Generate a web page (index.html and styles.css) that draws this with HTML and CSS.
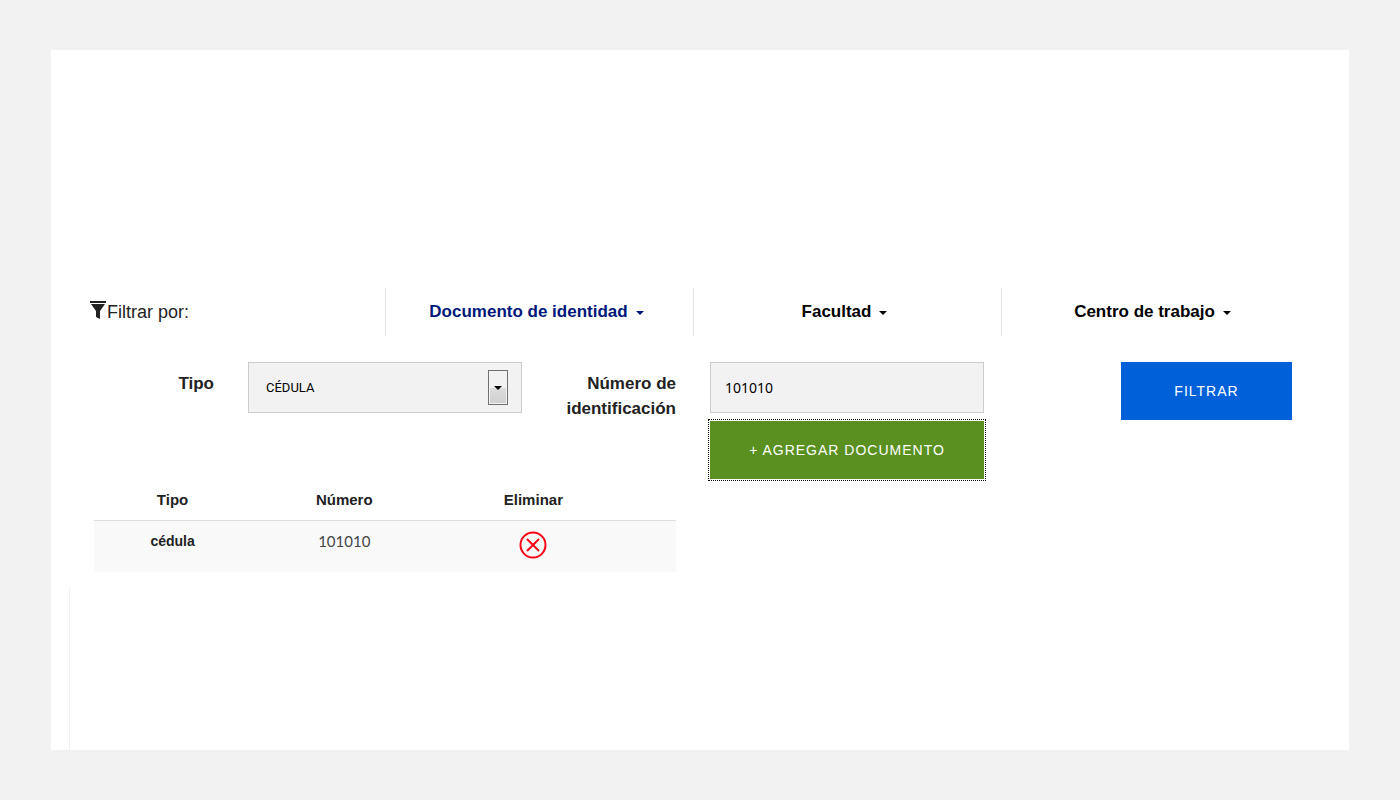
FILE: index.html
```html
<!DOCTYPE html>
<html lang="es">

<head>
    <meta charset="UTF-8">
    <meta name="viewport" content="width=device-width, initial-scale=1.0">
    <title>Filtrar</title>
    <link rel="stylesheet" href="styles.css">
</head>

<body>
    <main class="panel">
        <div class="filter-bar">
            <div class="filter-title">
                <svg class="icon-filter" width="16" height="20" viewBox="0 0 16 20" fill="#222">
                    <path d="M0 1h16v2H0z" />
                    <path d="M1 4h14l-5 7v8l-4-2v-6z" />
                </svg>
                <span>Filtrar por:</span>
            </div>
            <button type="button" class="filter-tab active">Documento de identidad<span class="caret"></span></button>
            <button type="button" class="filter-tab">Facultad<span class="caret"></span></button>
            <button type="button" class="filter-tab">Centro de trabajo<span class="caret"></span></button>
        </div>

        <form class="filter-form">
            <label class="form-label" for="tipo">Tipo</label>
            <div class="form-field">
                <div class="select-box">
                    <select id="tipo" class="form-control">
                        <option>CÉDULA</option>
                    </select>
                    <span class="select-arrow"><span class="arrow"></span></span>
                </div>
            </div>
            <label class="form-label" for="numero">Número de identificación</label>
            <div class="form-field">
                <input id="numero" class="form-control number" type="text" value="101010">
                <button type="button" class="btn btn-add">+ AGREGAR DOCUMENTO</button>
            </div>
            <div class="form-field form-action">
                <button type="submit" class="btn btn-filter">FILTRAR</button>
            </div>
        </form>

        <div class="documents">
            <table class="documents-table">
                <thead>
                    <tr>
                        <th class="col-type">Tipo</th>
                        <th class="col-number">Número</th>
                        <th class="col-delete">Eliminar</th>
                        <td></td>
                    </tr>
                </thead>
                <tbody>
                    <tr>
                        <th>cédula</th>
                        <td>101010</td>
                        <td>
                            <button type="button" class="btn-delete" aria-label="Eliminar">
                                <svg width="28" height="28" viewBox="0 0 28 28" fill="none" stroke="#fa0515" stroke-width="2">
                                    <circle cx="14" cy="14" r="12.5" />
                                    <path d="M8 8l12 12M20 8L8 20" />
                                </svg>
                            </button>
                        </td>
                        <td></td>
                    </tr>
                </tbody>
            </table>
        </div>

        <div class="results"></div>
    </main>
</body>

</html>
```

FILE: styles.css
```css
* {
    box-sizing: border-box;
}

body {
    margin: 0;
    padding: 50px 51px;
    background-color: #f2f2f2;
    color: #222;
    font-family: "Liberation Sans", Arial, sans-serif;
    font-size: 17px;
}

button {
    font-family: inherit;
    cursor: pointer;
}

.panel {
    display: flex;
    flex-direction: column;
    min-height: calc(100vh - 100px);
    padding: 238px 40px 0 26px;
    background-color: #fff;
}

/* filter bar */
.filter-bar {
    display: grid;
    grid-template-columns: repeat(4, 1fr);
    height: 48px;
}

.filter-title {
    display: flex;
    align-items: center;
    padding-left: 13px;
    gap: 1px;
    font-size: 18px;
}

.icon-filter {
    margin-bottom: 4px;
}

.filter-tab {
    display: flex;
    align-items: center;
    justify-content: center;
    gap: 8px;
    padding: 0 6px 0 0;
    border: 0;
    border-left: 1px solid #e3e3e3;
    background: none;
    color: #000;
    font-size: 17px;
    font-weight: bold;
}

.filter-tab.active {
    color: #00187a;
}

.caret {
    border-top: 4px solid;
    border-left: 4px solid transparent;
    border-right: 4px solid transparent;
    margin-top: 2px;
}

/* form */
.filter-form {
    display: grid;
    grid-template-columns: 1fr 2fr 1fr 2fr 2fr;
    margin-top: 26px;
}

.form-label {
    padding: 9px 17px 0 0;
    font-weight: bold;
    line-height: 25px;
    text-align: right;
}

.form-field {
    padding: 0 17px;
}

.form-control {
    display: block;
    width: 100%;
    height: 51px;
    padding: 0 14px;
    border: 1px solid #ccc;
    border-radius: 0;
    background-color: #f2f2f2;
    color: #000;
    font-family: Roboto, sans-serif;
    font-size: 13px;
    appearance: none;
}

select.form-control {
    padding: 0 17px;
}

.form-control.number {
    font-family: "Noto Sans", sans-serif;
    font-size: 14px;
}

.select-box {
    position: relative;
}

.select-arrow {
    position: absolute;
    top: 8px;
    right: 14px;
    display: flex;
    align-items: center;
    justify-content: center;
    width: 20px;
    height: 35px;
    border: 1px solid #707070;
    background: linear-gradient(#f2f2f2 50%, #ddd 50%, #cfcfcf);
    box-shadow: inset 0 0 0 1px #f3f3f3;
    pointer-events: none;
}

.arrow {
    border-top: 4px solid #000;
    border-left: 4px solid transparent;
    border-right: 4px solid transparent;
}

.btn {
    height: 58px;
    border: 0;
    color: #fff;
    font-size: 14px;
    letter-spacing: 1px;
}

.btn-add {
    width: 100%;
    margin-top: 8px;
    background-color: #599020;
    outline: 1px dotted #000;
    outline-offset: 1px;
}

.form-action {
    text-align: right;
}

.btn-filter {
    width: 171px;
    background-color: #0060d8;
}

/* documents table */
.documents {
    width: 50%;
    padding: 0 17px;
}

.documents-table {
    width: 100%;
    border-collapse: collapse;
    table-layout: fixed;
    font-size: 15px;
    text-align: center;
}

.documents-table th,
.documents-table td {
    padding: 10px 0 13px;
    line-height: 20px;
    vertical-align: top;
}

.documents-table thead th {
    padding: 11px 0 10px;
}

.documents-table thead td {
    padding: 0;
}

.documents-table tbody {
    border-top: 1px solid #ddd;
    background-color: #f9f9f9;
}

.documents-table tbody th {
    font-size: 14px;
}

.documents-table tbody td {
    color: #444;
    font-family: Lato, sans-serif;
}

.col-type {
    width: 27%;
}

.col-number {
    width: 32%;
}

.col-delete {
    width: 33%;
}

.btn-delete {
    display: block;
    margin: 0 auto;
    padding: 0;
    border: 0;
    background: none;
}

.btn-delete svg {
    display: block;
}

.results {
    flex: 1;
    margin: 15px 0 0 -8px;
    border-left: 1px solid #f2f2f2;
}
```
